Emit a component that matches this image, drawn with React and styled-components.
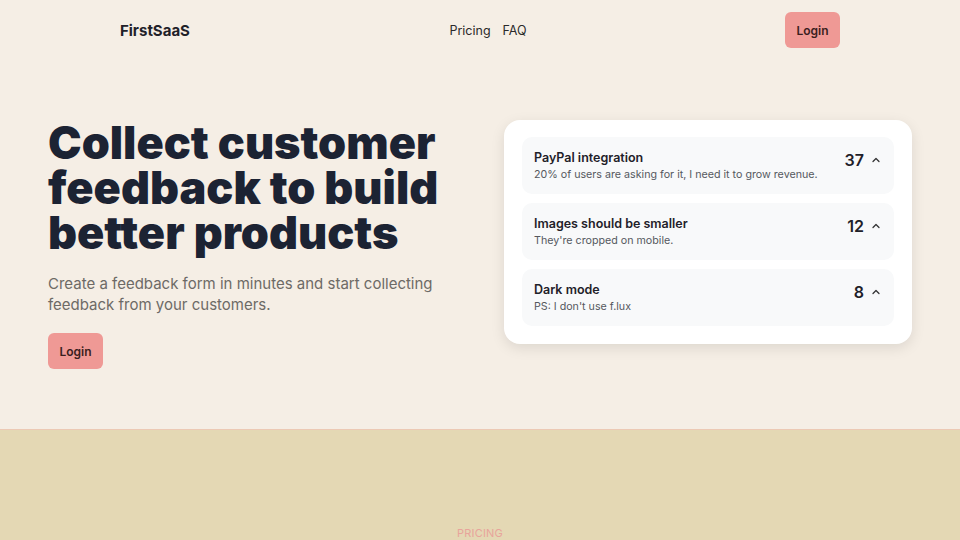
import React from "react";
import styled, { createGlobalStyle } from "styled-components";

const Global = createGlobalStyle`
  html, body { margin: 0; padding: 0; }
  body {
    background: #f5eee5;
    font-family: Inter, "Noto Sans", sans-serif;
    color: #1f2937;
  }
  * { box-sizing: border-box; }
`;

const Page = styled.div`
  width: 960px;
  height: 540px;
  overflow: hidden;
`;

const Nav = styled.nav`
  width: 720px;
  margin: 0 auto;
  height: 60px;
  display: grid;
  grid-template-columns: 1fr auto 1fr;
  align-items: center;
`;

const Brand = styled.div`
  font-weight: 700;
  font-size: 15px;
  color: #1f2129;
`;

const Links = styled.div`
  display: flex;
  gap: 12px;
  margin-left: 16px;
  font-size: 12.5px;
  color: #2a2a2a;
`;

const NavLink = styled.a`
  color: inherit;
  text-decoration: none;
`;

const Button = styled.button`
  justify-self: ${(p) => (p.$end ? "end" : "start")};
  border: none;
  background: #ef9995;
  color: #3b1e1e;
  border-radius: 6px;
  width: 55px;
  height: 36px;
  font-family: inherit;
  font-size: 12px;
  font-weight: 600;
  padding: 0;
  cursor: pointer;
`;

const Hero = styled.section`
  width: 864px;
  margin: 0 auto;
  height: 369px;
  display: flex;
  justify-content: space-between;
  align-items: flex-start;
  padding-top: 60px;
`;

const Left = styled.div`
  width: 420px;
  display: flex;
  flex-direction: column;
  align-items: flex-start;
`;

const Title = styled.h1`
  margin: 0;
  font-size: 45px;
  line-height: 45px;
  font-weight: 900;
  color: #1c2333;
`;

const Sub = styled.p`
  margin: 18px 0 18px;
  font-size: 15px;
  line-height: 21px;
  color: #6d6a66;
  width: 420px;
`;

const Card = styled.div`
  width: 408px;
  background: #ffffff;
  border-radius: 16px;
  box-shadow: 0 4px 14px rgba(0, 0, 0, 0.1);
  padding: 17px 18px 18px;
  display: flex;
  flex-direction: column;
  gap: 9px;
`;

const Item = styled.div`
  background: #f8f9fa;
  border-radius: 10px;
  height: 57px;
  padding: 0 12px;
  display: flex;
  align-items: center;
  justify-content: space-between;
`;

const ItemText = styled.div`
  display: flex;
  flex-direction: column;
  gap: 3px;
`;

const ItemTitle = styled.div`
  font-size: 12.5px;
  font-weight: 600;
  color: #1f2129;
`;

const ItemDesc = styled.div`
  font-size: 10.7px;
  color: #55585e;
`;

const Votes = styled.div`
  display: flex;
  align-items: center;
  gap: 6px;
  align-self: flex-start;
  margin-top: 13px;
`;

const Count = styled.span`
  font-size: 16px;
  font-weight: 600;
  color: #1f2129;
`;

const Pricing = styled.section`
  background: #e4d8b4;
  height: 200px;
  border-top: 1px solid #ecc9b4;
  display: flex;
  justify-content: center;
  padding-top: 96px;
`;

const Eyebrow = styled.div`
  font-size: 11px;
  color: #e8a49b;
  letter-spacing: 0.2px;
`;

const Chevron = () => (
  <svg width="12" height="12" viewBox="0 0 24 24" fill="none" stroke="#333" strokeWidth="2.5" strokeLinecap="round" strokeLinejoin="round">
    <path d="M6 15l6-6 6 6" />
  </svg>
);

const items = [
  { t: "PayPal integration", d: "20% of users are asking for it, I need it to grow revenue.", n: 37 },
  { t: "Images should be smaller", d: "They're cropped on mobile.", n: 12 },
  { t: "Dark mode", d: "PS: I don't use f.lux", n: 8 },
];

export default function App() {
  return (
    <Page>
      <Global />
      <Nav>
        <Brand>FirstSaaS</Brand>
        <Links>
          <NavLink href="#">Pricing</NavLink>
          <NavLink href="#">FAQ</NavLink>
        </Links>
        <Button $end>Login</Button>
      </Nav>
      <Hero>
        <Left>
          <Title>
            Collect customer feedback to build better products
          </Title>
          <Sub>Create a feedback form in minutes and start collecting feedback from your customers.</Sub>
          <Button>Login</Button>
        </Left>
        <Card>
          {items.map((it) => (
            <Item key={it.t}>
              <ItemText>
                <ItemTitle>{it.t}</ItemTitle>
                <ItemDesc>{it.d}</ItemDesc>
              </ItemText>
              <Votes>
                <Count>{it.n}</Count>
                <Chevron />
              </Votes>
            </Item>
          ))}
        </Card>
      </Hero>
      <Pricing>
        <Eyebrow>PRICING</Eyebrow>
      </Pricing>
    </Page>
  );
}
